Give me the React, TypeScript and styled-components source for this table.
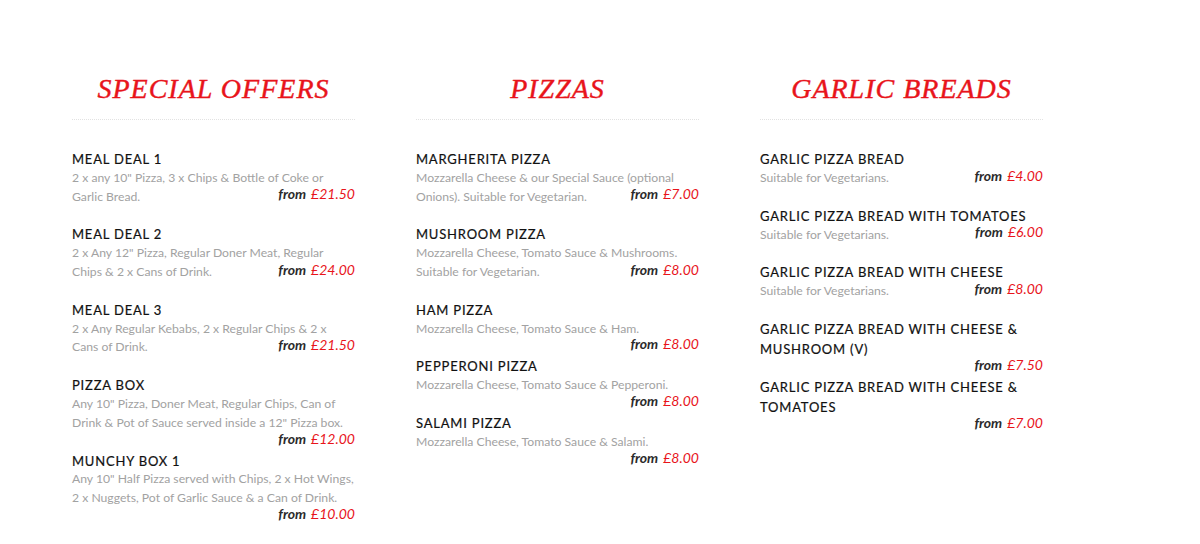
import React from "react";
import styled, { createGlobalStyle } from "styled-components";

type MenuItem = {
  name: string[];
  desc: string[];
  price: string;
  inline: boolean;
};

type Section = {
  title: string;
  items: MenuItem[];
};

const VEG = ["Suitable for Vegetarians."];

const sections: Section[] = [
  {
    title: "Special Offers",
    items: [
      {
        name: ["MEAL DEAL 1"],
        desc: ['2 x any 10" Pizza, 3 x Chips & Bottle of Coke or', "Garlic Bread."],
        price: "£21.50",
        inline: true
      },
      {
        name: ["MEAL DEAL 2"],
        desc: ['2 x Any 12" Pizza, Regular Doner Meat, Regular', "Chips & 2 x Cans of Drink."],
        price: "£24.00",
        inline: true
      },
      {
        name: ["MEAL DEAL 3"],
        desc: ["2 x Any Regular Kebabs, 2 x Regular Chips & 2 x", "Cans of Drink."],
        price: "£21.50",
        inline: true
      },
      {
        name: ["PIZZA BOX"],
        desc: [
          'Any 10" Pizza, Doner Meat, Regular Chips, Can of',
          'Drink & Pot of Sauce served inside a 12" Pizza box.'
        ],
        price: "£12.00",
        inline: false
      },
      {
        name: ["MUNCHY BOX 1"],
        desc: [
          'Any 10" Half Pizza served with Chips, 2 x Hot Wings,',
          "2 x Nuggets, Pot of Garlic Sauce & a Can of Drink."
        ],
        price: "£10.00",
        inline: false
      }
    ]
  },
  {
    title: "Pizzas",
    items: [
      {
        name: ["MARGHERITA PIZZA"],
        desc: ["Mozzarella Cheese & our Special Sauce (optional", "Onions). Suitable for Vegetarian."],
        price: "£7.00",
        inline: true
      },
      {
        name: ["MUSHROOM PIZZA"],
        desc: ["Mozzarella Cheese, Tomato Sauce & Mushrooms.", "Suitable for Vegetarian."],
        price: "£8.00",
        inline: true
      },
      {
        name: ["HAM PIZZA"],
        desc: ["Mozzarella Cheese, Tomato Sauce & Ham."],
        price: "£8.00",
        inline: false
      },
      {
        name: ["PEPPERONI PIZZA"],
        desc: ["Mozzarella Cheese, Tomato Sauce & Pepperoni."],
        price: "£8.00",
        inline: false
      },
      {
        name: ["SALAMI PIZZA"],
        desc: ["Mozzarella Cheese, Tomato Sauce & Salami."],
        price: "£8.00",
        inline: false
      }
    ]
  },
  {
    title: "Garlic Breads",
    items: [
      { name: ["GARLIC PIZZA BREAD"], desc: VEG, price: "£4.00", inline: true },
      { name: ["GARLIC PIZZA BREAD WITH TOMATOES"], desc: VEG, price: "£6.00", inline: true },
      { name: ["GARLIC PIZZA BREAD WITH CHEESE"], desc: VEG, price: "£8.00", inline: true },
      {
        name: ["GARLIC PIZZA BREAD WITH CHEESE &", "MUSHROOM (V)"],
        desc: [],
        price: "£7.50",
        inline: false
      },
      {
        name: ["GARLIC PIZZA BREAD WITH CHEESE &", "TOMATOES"],
        desc: [],
        price: "£7.00",
        inline: false
      }
    ]
  }
];

const GlobalStyle = createGlobalStyle`
  html, body {
    margin: 0;
    padding: 0;
    background: #ffffff;
  }
  body {
    font-family: Lato, "Liberation Sans", sans-serif;
  }
`;

const Page = styled.div`
  width: 1200px;
  height: 544px;
  box-sizing: border-box;
  padding: 72px 0 0 72px;
  display: grid;
  grid-template-columns: repeat(3, 283px);
  column-gap: 61px;
  align-items: start;
  overflow: hidden;
`;

const Column = styled.section`
  display: flex;
  flex-direction: column;
`;

const Heading = styled.h2`
  margin: 0;
  padding-bottom: 13px;
  border-bottom: 1px dotted #e2e2e2;
  font-family: "Liberation Serif", serif;
  font-style: italic;
  font-weight: 400;
  font-size: 28px;
  line-height: 34px;
  letter-spacing: 1px;
  text-transform: uppercase;
  text-align: center;
  color: #e8141b;
  -webkit-text-stroke: 0.4px #e8141b;
`;

const List = styled.div`
  display: flex;
  flex-direction: column;
  padding-top: 29px;
`;

const Item = styled.article<{ $inline: boolean }>`
  margin-bottom: ${({ $inline }) => ($inline ? "18px" : "0")};
`;

const Name = styled.h3`
  margin: 0;
  font-size: 13px;
  line-height: 20px;
  font-weight: 400;
  letter-spacing: 0.8px;
  color: #111111;
  white-space: nowrap;
  -webkit-text-stroke: 0.2px #111111;
`;

const Desc = styled.div`
  font-size: 12.2px;
  line-height: 18.7px;
  font-weight: 400;
  color: #a2a2a2;
  white-space: nowrap;
`;

const Line = styled.div`
  display: flex;
  justify-content: space-between;
  align-items: flex-end;
  height: 18.7px;
`;

const PriceRow = styled.div`
  display: flex;
  justify-content: flex-end;
  align-items: center;
  height: 18px;
`;

const Price = styled.span`
  margin: -3px 0 3px;
  font-style: italic;
  font-size: 14px;
  line-height: 18px;
  font-weight: 700;
  color: #2b2b2b;
  white-space: nowrap;
`;

const Amount = styled.span`
  font-weight: 400;
  color: #e8141b;
  margin-left: 5px;
`;

const PriceTag: React.FC<{ value: string }> = ({ value }) => (
  <Price>
    from<Amount>{value}</Amount>
  </Price>
);

const MenuEntry: React.FC<{ item: MenuItem }> = ({ item }) => {
  const last = item.desc.length - 1;
  return (
    <Item $inline={item.inline}>
      <Name>
        {item.name.map((n, i) => (
          <div key={i}>{n}</div>
        ))}
      </Name>
      {item.desc.length > 0 && (
        <Desc>
          {item.desc.map((l, i) => (
            <Line key={i}>
              <span>{l}</span>
              {item.inline && i === last && <PriceTag value={item.price} />}
            </Line>
          ))}
        </Desc>
      )}
      {!item.inline && (
        <PriceRow>
          <PriceTag value={item.price} />
        </PriceRow>
      )}
    </Item>
  );
};

const App: React.FC = () => (
  <>
    <GlobalStyle />
    <Page>
      {sections.map((s) => (
        <Column key={s.title}>
          <Heading>{s.title}</Heading>
          <List>
            {s.items.map((it) => (
              <MenuEntry key={it.name.join(" ")} item={it} />
            ))}
          </List>
        </Column>
      ))}
    </Page>
  </>
);

export default App;
